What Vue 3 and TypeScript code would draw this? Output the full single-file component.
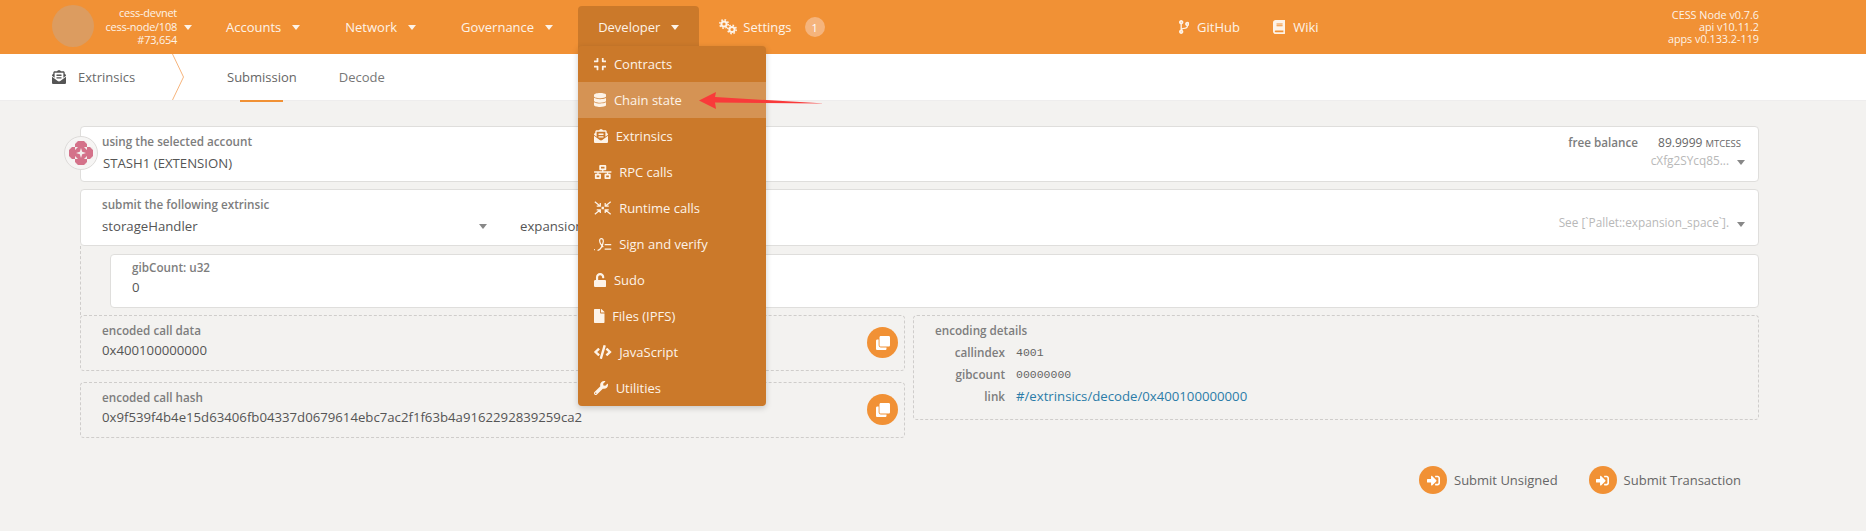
<script setup lang="ts">
type Icon = { w: number; d: string; line?: boolean };

const icons: Record<string, Icon> = {
  compress: { w: 448, d: 'M436 192H312c-13.3 0-24-10.7-24-24V44c0-6.6 5.4-12 12-12h40c6.6 0 12 5.4 12 12v84h84c6.6 0 12 5.4 12 12v40c0 6.6-5.4 12-12 12zm-276-24V44c0-6.6-5.4-12-12-12h-40c-6.6 0-12 5.4-12 12v84H12c-6.6 0-12 5.4-12 12v40c0 6.6 5.4 12 12 12h124c13.3 0 24-10.7 24-24zm0 300V344c0-13.3-10.7-24-24-24H12c-6.6 0-12 5.4-12 12v40c0 6.6 5.4 12 12 12h84v84c0 6.6 5.4 12 12 12h40c6.6 0 12-5.4 12-12zm192 0v-84h84c6.6 0 12-5.4 12-12v-40c0-6.6-5.4-12-12-12H312c-13.3 0-24 10.7-24 24v124c0 6.6 5.4 12 12 12h40c6.6 0 12-5.4 12-12z' },
  database: { w: 448, d: 'M448 73.143v45.714C448 159.143 347.667 192 224 192S0 159.143 0 118.857V73.143C0 32.857 100.333 0 224 0s224 32.857 224 73.143zM448 176v102.857C448 319.143 347.667 352 224 352S0 319.143 0 278.857V176c48.125 33.143 136.208 48.572 224 48.572S399.874 209.143 448 176zm0 160v102.857C448 479.143 347.667 512 224 512S0 479.143 0 438.857V336c48.125 33.143 136.208 48.572 224 48.572S399.874 369.143 448 336z' },
  envelope: { w: 512, d: 'M176 216h160c8.84 0 16-7.16 16-16v-16c0-8.84-7.16-16-16-16H176c-8.84 0-16 7.16-16 16v16c0 8.84 7.16 16 16 16zm-16 80c0 8.84 7.16 16 16 16h160c8.84 0 16-7.16 16-16v-16c0-8.84-7.16-16-16-16H176c-8.84 0-16 7.16-16 16v16zm96 121.13c-16.42 0-32.84-5.06-46.86-15.19L0 250.86V464c0 26.51 21.49 48 48 48h416c26.51 0 48-21.49 48-48V250.86L302.86 401.94c-14.02 10.12-30.44 15.19-46.86 15.19zm237.61-254.18c-8.85-6.94-17.24-13.47-29.61-22.81V96c0-26.51-21.49-48-48-48h-77.55c-3.04-2.2-5.87-4.26-9.04-6.56C312.6 29.17 279.2-.35 256 0c-23.2-.35-56.59 29.17-73.41 41.44-3.17 2.3-6 4.36-9.04 6.56H96c-26.51 0-48 21.49-48 48v44.14c-12.37 9.33-20.76 15.87-29.61 22.81A47.995 47.995 0 0 0 0 200.72v10.65l96 69.35V96h320v184.72l96-69.35v-10.65c0-14.74-6.78-28.67-18.39-37.77z' },
  network: { w: 640, d: 'M640 264v-16c0-8.84-7.16-16-16-16H344v-40h72c17.67 0 32-14.33 32-32V32c0-17.67-14.33-32-32-32H224c-17.67 0-32 14.33-32 32v128c0 17.67 14.33 32 32 32h72v40H16c-8.84 0-16 7.16-16 16v16c0 8.84 7.16 16 16 16h104v40H64c-17.67 0-32 14.33-32 32v128c0 17.67 14.33 32 32 32h160c17.67 0 32-14.33 32-32V352c0-17.67-14.33-32-32-32h-56v-40h304v40h-56c-17.67 0-32 14.33-32 32v128c0 17.67 14.33 32 32 32h160c17.67 0 32-14.33 32-32V352c0-17.67-14.33-32-32-32h-56v-40h104c8.84 0 16-7.16 16-16zM256 128V64h128v64H256zm-64 320H96v-64h96v64zm352 0h-96v-64h96v64z' },
  runtime: { w: 640, line: true, d: 'M30 30L230 190M230 70V190H100M610 30L410 190M410 70V190H540M30 482L230 322M230 442V322H100M610 482L410 322M410 442V322H540M300 236h40v40h-40z' },
  signature: { w: 640, line: true, d: 'M0 460h30M130 490c110 0 190-180 210-330 10-110-110-140-130-50-20 90 70 200 130 260M390 280h240M390 440h240' },
  unlock: { w: 448, d: 'M400 256H152V152.9c0-39.6 31.7-72.5 71.3-72.9 40-.4 72.7 32.1 72.7 72v16c0 13.3 10.7 24 24 24h32c13.3 0 24-10.7 24-24v-16C376 68 307.5-.3 223.5 0 139.5.3 72 69.5 72 153.5V256H48c-26.5 0-48 21.5-48 48v160c0 26.5 21.5 48 48 48h352c26.5 0 48-21.5 48-48V304c0-26.5-21.5-48-48-48z' },
  file: { w: 384, d: 'M224 136V0H24C10.7 0 0 10.7 0 24v464c0 13.3 10.7 24 24 24h336c13.3 0 24-10.7 24-24V160H248c-13.2 0-24-10.8-24-24zm160-14.1v6.1H256V0h6.1c6.4 0 12.5 2.5 17 7l97.9 98c4.5 4.5 7 10.6 7 16.9z' },
  code: { w: 640, d: 'M278.9 511.5l-61-17.7c-6.4-1.8-10-8.5-8.2-14.9L346.2 8.7c1.8-6.4 8.5-10 14.9-8.2l61 17.7c6.4 1.8 10 8.5 8.2 14.9L293.8 503.3c-1.9 6.4-8.5 10.1-14.9 8.2zm-114-112.2l43.5-46.4c4.6-4.9 4.3-12.7-.8-17.2L117 256l90.6-79.7c5.1-4.5 5.5-12.3.8-17.2l-43.5-46.4c-4.5-4.8-12.1-5.1-17-.5L3.8 247.2c-5.1 4.7-5.1 12.8 0 17.5l144.1 135.1c4.9 4.6 12.5 4.4 17-.5zm327.2.6l144.1-135.1c5.1-4.7 5.1-12.8 0-17.5L492.1 112.1c-4.8-4.5-12.4-4.3-17 .5L431.6 159c-4.6 4.9-4.3 12.7.8 17.2L523 256l-90.6 79.7c-5.1 4.5-5.5 12.3-.8 17.2l43.5 46.4c4.5 4.9 12.1 5.1 17 .6z' },
  wrench: { w: 512, d: 'M507.73 109.1c-2.24-9.03-13.54-12.09-20.12-5.51l-74.36 74.36-67.88-11.31-11.31-67.88 74.36-74.36c6.62-6.62 3.43-17.9-5.66-20.16-47.38-11.74-99.55.91-136.58 37.93-39.64 39.64-50.55 97.1-34.05 147.2L18.74 402.76c-24.99 24.99-24.99 65.51 0 90.5 24.99 24.99 65.51 24.99 90.5 0l213.21-213.21c50.12 16.71 107.47 5.68 147.37-34.22 37.07-37.07 49.7-89.32 37.91-136.73zM64 472c-13.25 0-24-10.75-24-24 0-13.26 10.75-24 24-24s24 10.74 24 24c0 13.25-10.75 24-24 24z' },
  branch: { w: 384, d: 'M384 144c0-44.2-35.8-80-80-80s-80 35.8-80 80c0 36.4 24.3 67.1 57.5 76.8-.6 16.1-4.2 28.5-11 36.9-15.4 19.2-49.3 22.4-85.2 25.7-28.2 2.6-57.4 5.4-81.3 16.9v-144c32.5-10.2 56-40.5 56-76.3 0-44.2-35.8-80-80-80S0 35.8 0 80c0 35.8 23.5 66.1 56 76.3v199.3C23.5 365.9 0 396.2 0 432c0 44.2 35.8 80 80 80s80-35.8 80-80c0-34-21.2-63.1-51.2-74.6 3.1-5.2 7.8-9.8 14.9-13.4 16.2-8.2 40.4-10.4 66.1-12.8 42.2-3.9 90-8.4 118.2-43.4 14-17.4 21.1-39.8 21.6-67.9 31.6-10.8 54.4-40.7 54.4-75.9zM80 64c8.8 0 16 7.2 16 16s-7.2 16-16 16-16-7.2-16-16 7.2-16 16-16zm0 384c-8.8 0-16-7.2-16-16s7.2-16 16-16 16 7.2 16 16-7.2 16-16 16zm224-320c8.8 0 16 7.2 16 16s-7.2 16-16 16-16-7.2-16-16 7.2-16 16-16z' },
  book: { w: 448, d: 'M448 360V24c0-13.3-10.7-24-24-24H96C43 0 0 43 0 96v320c0 53 43 96 96 96h328c13.3 0 24-10.7 24-24v-16c0-7.5-3.5-14.3-8.9-18.7-4.2-15.4-4.2-59.3 0-74.7 5.4-4.3 8.9-11.1 8.9-18.6zM128 134c0-3.3 2.7-6 6-6h212c3.3 0 6 2.7 6 6v20c0 3.3-2.7 6-6 6H134c-3.3 0-6-2.7-6-6v-20zm0 64c0-3.3 2.7-6 6-6h212c3.3 0 6 2.7 6 6v20c0 3.3-2.7 6-6 6H134c-3.3 0-6-2.7-6-6v-20zm253.4 250H96c-17.7 0-32-14.3-32-32 0-17.6 14.4-32 32-32h285.4c-1.9 17.1-1.9 46.9 0 64z' },
  clone: { w: 512, d: 'M464 0c26.51 0 48 21.49 48 48v288c0 26.51-21.49 48-48 48H176c-26.51 0-48-21.49-48-48V48c0-26.51 21.49-48 48-48h288M176 416c-44.112 0-80-35.888-80-80V128H48c-26.51 0-48 21.49-48 48v288c0 26.51 21.49 48 48 48h288c26.51 0 48-21.49 48-48v-48H176z' },
  signIn: { w: 512, d: 'M416 448h-84c-6.6 0-12-5.4-12-12v-40c0-6.6 5.4-12 12-12h84c17.7 0 32-14.3 32-32V160c0-17.7-14.3-32-32-32h-84c-6.6 0-12-5.4-12-12V76c0-6.6 5.4-12 12-12h84c53 0 96 43 96 96v192c0 53-43 96-96 96zm-47-201L201 79c-15-15-41-4.5-41 17v96H24c-13.3 0-24 10.7-24 24v96c0 13.3 10.7 24 24 24h136v96c0 21.5 26 32 41 17l168-168c9.3-9.4 9.3-24.6 0-34z' },
};

const navBefore = ['Accounts', 'Network', 'Governance'];

const menu = [
  { label: 'Contracts', icon: 'compress' },
  { label: 'Chain state', icon: 'database', active: true },
  { label: 'Extrinsics', icon: 'envelope' },
  { label: 'RPC calls', icon: 'network' },
  { label: 'Runtime calls', icon: 'runtime' },
  { label: 'Sign and verify', icon: 'signature' },
  { label: 'Sudo', icon: 'unlock' },
  { label: 'Files (IPFS)', icon: 'file' },
  { label: 'JavaScript', icon: 'code' },
  { label: 'Utilities', icon: 'wrench' },
];

const details = [
  { label: 'callindex', value: '4001', mono: true },
  { label: 'gibcount', value: '00000000', mono: true },
  { label: 'link', value: '#/extrinsics/decode/0x400100000000', mono: false },
];

const encoded = [
  { label: 'encoded call data', value: '0x400100000000' },
  { label: 'encoded call hash', value: '0x9f539f4b4e15d63406fb04337d0679614ebc7ac2f1f63b4a9162292839259ca2' },
];

const iconBox = (name: string) => `0 0 ${icons[name].w} 512`;
const iconWidth = (name: string, size: number) => `${(icons[name].w / 512) * size}px`;
</script>

<template>
  <div class="page">
    <header class="topbar">
      <div class="logo"></div>
      <div class="chain">
        <div>cess-devnet</div>
        <div>cess-node/108</div>
        <div>#73,654</div>
      </div>
      <span class="caret chain-caret"></span>
      <nav class="nav">
        <div v-for="item in navBefore" :key="item" class="nav-item">
          {{ item }}<span class="caret"></span>
        </div>
        <div class="nav-item open">
          Developer<span class="caret"></span>
          <ul class="menu">
            <li v-for="m in menu" :key="m.label" :class="{ active: m.active }">
              <svg
                class="ic"
                :class="{ line: icons[m.icon].line }"
                :viewBox="iconBox(m.icon)"
                :style="{ width: iconWidth(m.icon, 14) }"
              ><path :d="icons[m.icon].d" /></svg>
              {{ m.label }}
            </li>
          </ul>
        </div>
        <div class="nav-item settings">
          <svg class="cogs" viewBox="0 0 18 16">
            <g fill="none" stroke="currentColor">
              <circle cx="5" cy="5" r="2.6" stroke-width="2" />
              <circle cx="5" cy="5" r="4.2" stroke-width="1.6" stroke-dasharray="1.6 1.7" />
              <circle cx="13" cy="10.5" r="2.6" stroke-width="2" />
              <circle cx="13" cy="10.5" r="4.2" stroke-width="1.6" stroke-dasharray="1.6 1.7" />
            </g>
          </svg>
          Settings
          <span class="badge">1</span>
        </div>
      </nav>
      <div class="links">
        <a class="ext"><svg class="ic" :viewBox="iconBox('branch')" :style="{ width: iconWidth('branch', 14) }"><path :d="icons.branch.d" /></svg>GitHub</a>
        <a class="ext"><svg class="ic" :viewBox="iconBox('book')" :style="{ width: iconWidth('book', 14) }"><path :d="icons.book.d" /></svg>Wiki</a>
      </div>
      <div class="versions">
        <div>CESS Node v0.7.6</div>
        <div>api v10.11.2</div>
        <div>apps v0.133.2-119</div>
      </div>
    </header>

    <div class="tabs">
      <div class="section">
        <svg class="ic" :viewBox="iconBox('envelope')" :style="{ width: iconWidth('envelope', 14) }"><path :d="icons.envelope.d" /></svg>
        Extrinsics
      </div>
      <svg class="chevron" viewBox="0 0 12 46"><path d="M.5 0L11.5 23 .5 46" /></svg>
      <div class="tab current">Submission</div>
      <div class="tab">Decode</div>
    </div>

    <main class="content">
      <section class="card account">
        <svg class="avatar" viewBox="0 0 34 34">
          <circle cx="17" cy="17" r="16.5" fill="#f6f5f4" stroke="#dddbd9" />
          <path fill="#d4728a" d="M11 5h12v6h6v12h-6v6H11v-6H5V11h6z" />
          <path fill="#f3f0ee" d="M11 5h3l-3 3zM23 5h-3l3 3zM11 29h3l-3-3zM23 29h-3l3-3zM5 11h3l-3 3zM5 23h3l-3-3zM29 11h-3l3 3zM29 23h-3l3-3zM11 11h3l-3 3zM23 11h-3l3 3zM11 23h3l-3-3zM23 23h-3l3-3zM17 12l1.2 3.8L22 17l-3.8 1.2L17 22l-1.2-3.8L12 17l3.8-1.2z" />
        </svg>
        <div class="col">
          <div class="label">using the selected account</div>
          <div class="value">STASH1 (EXTENSION)</div>
        </div>
        <div class="side">
          <div class="balance">
            <span class="label">free balance</span>
            <span class="amount">89.9999 <small>MTCESS</small></span>
          </div>
          <div class="muted">cXfg2SYcq85...<span class="caret gray"></span></div>
        </div>
      </section>

      <section class="card call">
        <div class="col module">
          <div class="label">submit the following extrinsic</div>
          <div class="value">storageHandler</div>
          <span class="caret gray"></span>
        </div>
        <div class="value method">expansion_space</div>
        <div class="muted doc">See [`Pallet::expansion_space`].<span class="caret gray"></span></div>
      </section>

      <div class="params">
        <section class="card param">
          <div class="label">gibCount: u32</div>
          <div class="value">0</div>
        </section>
      </div>

      <div class="output">
        <div class="left">
          <section v-for="e in encoded" :key="e.label" class="dashed row">
            <div class="col">
              <div class="label">{{ e.label }}</div>
              <div class="value">{{ e.value }}</div>
            </div>
            <span class="copy">
              <svg class="ic" viewBox="0 0 512 512"><path :d="icons.clone.d" /></svg>
            </span>
          </section>
        </div>
        <section class="dashed details">
          <div class="label heading">encoding details</div>
          <div class="grid">
            <template v-for="d in details" :key="d.label">
              <div class="label key">{{ d.label }}</div>
              <div :class="d.mono ? 'mono' : 'link'">{{ d.value }}</div>
            </template>
          </div>
        </section>
      </div>

      <div class="actions">
        <div class="btn"><span class="round"><svg class="ic" viewBox="0 0 512 512"><path :d="icons.signIn.d" /></svg></span>Submit Unsigned</div>
        <div class="btn"><span class="round"><svg class="ic" viewBox="0 0 512 512"><path :d="icons.signIn.d" /></svg></span>Submit Transaction</div>
      </div>
    </main>

    <!-- annotation arrow drawn over the screenshot -->
    <svg class="arrow" viewBox="0 0 128 18"><path d="M0 8.5L17 0l-1 5 110 6.5-110-1 1 6.5z" /></svg>
  </div>
</template>

<style>
html,
body {
  margin: 0;
  background: #f3f2f0;
}
</style>

<style scoped>
.page {
  position: relative;
  height: 531px;
  overflow: hidden;
  background: #f3f2f0;
  color: #555;
  font-family: "Open Sans", "Noto Sans", sans-serif;
  font-size: 13px;
}

.ic {
  height: 14px;
  fill: currentColor;
  flex: none;
}
.ic.line {
  fill: none;
  stroke: currentColor;
  stroke-width: 46;
}

.caret {
  display: inline-block;
  width: 0;
  height: 0;
  margin-left: 11px;
  border-left: 4.5px solid transparent;
  border-right: 4.5px solid transparent;
  border-top: 5.5px solid currentColor;
}
.caret.gray {
  color: #888;
  margin-left: 8px;
  border-left-width: 4px;
  border-right-width: 4px;
  border-top-width: 5px;
}

.topbar {
  display: flex;
  height: 54px;
  background: #f19135;
  color: #fdf3e8;
}
.logo {
  width: 42px;
  height: 42px;
  margin: 5px 0 0 52px;
  border-radius: 50%;
  background: #dc9c60;
}
.chain {
  width: 83px;
  margin-top: 6px;
  text-align: right;
  font-size: 11px;
  letter-spacing: -0.25px;
  line-height: 13.5px;
  white-space: nowrap;
}
.chain-caret {
  margin: 25px 0 0 7px;
}
.nav {
  display: flex;
  margin-left: 14px;
}
.nav-item {
  position: relative;
  display: flex;
  align-items: center;
  height: 48px;
  margin-top: 6px;
  margin-right: 5px;
  padding: 0 20px 6px;
  box-sizing: border-box;
  border-radius: 4px 4px 0 0;
  white-space: nowrap;
}
.nav-item.open {
  margin-right: 0;
  background: #cb792a;
}
.settings {
  gap: 6px;
}
.cogs {
  width: 18px;
  height: 16px;
}
.badge {
  display: flex;
  align-items: center;
  justify-content: center;
  width: 20px;
  height: 20px;
  margin-left: 7px;
  border-radius: 50%;
  background: #f5b47c;
  color: #fff;
  font-size: 11px;
}
.menu {
  position: absolute;
  z-index: 5;
  top: 40px;
  left: 0;
  width: 188px;
  margin: 0;
  padding: 0;
  list-style: none;
  border-radius: 4px;
  background: #cb792a;
  box-shadow: 0 2px 6px rgba(0, 0, 0, 0.18);
}
.menu li {
  display: flex;
  align-items: center;
  gap: 7.5px;
  height: 36px;
  padding-left: 16px;
}
.menu li.active {
  background: #d59354;
}
.links {
  display: flex;
  margin-left: 329px;
  gap: 33px;
  padding-top: 20px;
}
.ext {
  display: flex;
  align-items: flex-start;
  gap: 8px;
  line-height: 14px;
}
.versions {
  margin-left: auto;
  margin-right: 107px;
  padding-top: 9px;
  text-align: right;
  font-size: 10.8px;
  line-height: 12.2px;
}

.tabs {
  display: flex;
  height: 46px;
  align-items: center;
  background: #fff;
  border-bottom: 1px solid #eeeded;
  box-sizing: content-box;
}
.section {
  display: flex;
  align-items: center;
  gap: 12px;
  width: 120px;
  margin-left: 52px;
  color: #6a6a6a;
}
.section .ic {
  color: #555;
}
.chevron {
  width: 12px;
  height: 46px;
  fill: none;
  stroke: #f6b47c;
}
.tab {
  position: relative;
  display: flex;
  align-items: center;
  height: 46px;
  margin-left: 42px;
  color: #777;
}
.tab.current {
  margin-left: 43px;
  color: #666;
}
.tab.current::after {
  content: "";
  position: absolute;
  left: 13px;
  right: 14px;
  bottom: -2px;
  height: 2px;
  background: #f19135;
}

.content {
  display: flex;
  flex-direction: column;
  padding: 25px 107px 0 80px;
}
.card {
  position: relative;
  display: flex;
  box-sizing: border-box;
  padding: 6px 0 0 21px;
  background: #fff;
  border: 1px solid #dfdedc;
  border-radius: 4px;
}
.label {
  color: #7d7d7d;
  font-size: 11.7px;
  font-weight: 600;
  line-height: 16px;
  white-space: nowrap;
}
.value {
  margin-top: 5px;
  font-size: 13.2px;
  line-height: 18px;
  color: #555;
  white-space: nowrap;
}
.col {
  position: relative;
}
.muted {
  color: #b8b8b8;
  font-size: 11.8px;
  white-space: nowrap;
}

.account {
  height: 56px;
  justify-content: space-between;
}
.account .value {
  margin-left: 1px;
}
.avatar {
  position: absolute;
  left: -17px;
  top: 9px;
  width: 34px;
  height: 34px;
}
.side {
  padding: 1px 17px 0 0;
  text-align: right;
}
.side .caret {
  margin-right: -4px;
}
.balance {
  display: flex;
  gap: 20px;
  align-items: baseline;
  line-height: 16px;
}
.amount {
  font-size: 12px;
  color: #666;
}
.amount small {
  font-size: 9.5px;
}
.side .muted {
  margin-top: -1px;
  line-height: 18px;
}

.call {
  height: 57px;
  margin-top: 7px;
  padding-right: 13px;
}
.module {
  width: 385px;
}
.module .caret {
  position: absolute;
  right: 0;
  top: 28px;
}
.method {
  margin: 21px 0 0 33px;
}
.doc {
  margin: 18px 0 0 auto;
}

.params {
  padding: 8px 0 7px 29px;
  border-left: 1px dashed #cfcdcb;
}
.param {
  flex-direction: column;
  height: 54px;
  padding-top: 4px;
}
.param .value {
  margin-top: 3px;
}

.output {
  display: flex;
  gap: 8px;
  align-items: flex-start;
}
.left {
  display: flex;
  flex-direction: column;
  gap: 11px;
  width: 825px;
  flex: none;
}
.dashed {
  box-sizing: border-box;
  border: 1px dashed #cfcdcb;
  border-radius: 4px;
}
.row {
  display: flex;
  align-items: flex-start;
  justify-content: space-between;
  height: 56px;
  padding: 6px 6px 0 21px;
}
.row .value {
  margin-top: 3px;
}
.copy,
.round {
  display: flex;
  align-items: center;
  justify-content: center;
  border-radius: 50%;
  background: #f19135;
  color: #fff;
}
.copy {
  width: 31px;
  height: 31px;
  margin-top: 5px;
  flex: none;
}
.details {
  flex: 1;
  height: 105px;
  padding-top: 6px;
}
.heading {
  padding-left: 21px;
}
.grid {
  display: grid;
  grid-template-columns: 91px 1fr;
  column-gap: 11px;
  grid-auto-rows: 22px;
  margin-top: 3px;
  align-items: center;
}
.key {
  text-align: right;
}
.mono {
  font-family: "Liberation Mono", monospace;
  font-size: 11.5px;
  color: #666;
}
.link {
  font-size: 13.2px;
  color: #2b7ca8;
  white-space: nowrap;
}

.actions {
  display: flex;
  justify-content: flex-end;
  gap: 31px;
  margin-top: 28px;
  padding-right: 18px;
}
.btn {
  display: flex;
  align-items: center;
  gap: 7px;
  color: #666;
  font-size: 13px;
}
.round {
  width: 28px;
  height: 28px;
}
.round .ic {
  height: 13px;
}

.arrow {
  position: absolute;
  z-index: 6;
  left: 699px;
  top: 92px;
  width: 128px;
  height: 18px;
  fill: #f93a3a;
}
</style>
